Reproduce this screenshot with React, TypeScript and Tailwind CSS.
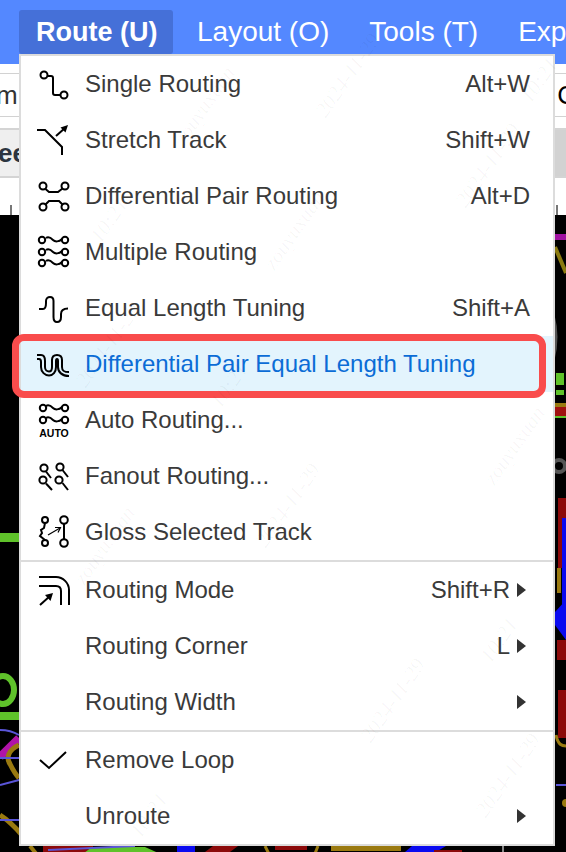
import type { ReactNode } from "react";

const font = "font-['Liberation_Sans',Arial,sans-serif]";

function Icon({ children }: { children: ReactNode }) {
  return (
    <svg width="36" height="36" viewBox="0 0 36 36" fill="none" stroke="#000" strokeWidth="2" className="shrink-0">
      {children}
    </svg>
  );
}

const wave = (y: number) => `M10 ${y - 2} C13 ${y - 4} 15 ${y - 2} 17 ${y} C19 ${y + 2} 23 ${y + 2} 26 ${y - 1}`;

const icons: Record<string, ReactNode> = {
  single: (
    <>
      <circle cx="8" cy="9" r="3.5" />
      <circle cx="28" cy="29" r="3.5" />
      <path d="M11.5 10H15C16.5 10 17 11 17 12V27C17 28.5 17.5 29 19 29H24.5" />
    </>
  ),
  stretch: (
    <>
      <path d="M1 8H9L26 25V33" />
      <path d="M20 14L29 6" />
      <path d="M32 3L24.5 5.5L29.5 10.5Z" fill="#000" stroke="none" />
    </>
  ),
  diff: (
    <>
      <circle cx="7" cy="8" r="3.5" />
      <circle cx="29" cy="8" r="3.5" />
      <circle cx="7" cy="29" r="3.5" />
      <circle cx="29" cy="29" r="3.5" />
      <path d="M9.5 11L13 14H22L26.5 10.5" />
      <path d="M9.5 26.5L13 23H23L26.5 26.5" />
    </>
  ),
  multi: (
    <>
      {[6, 18, 29].map((y) => (
        <g key={y}>
          <circle cx="6" cy={y} r="3.2" />
          <circle cx="29" cy={y} r="3.2" />
          <path d={wave(y)} />
        </g>
      ))}
    </>
  ),
  tuning: <path d="M3 19H7C9.5 19 10 16 10 13V11C10 8.5 12 7 14 7C16 7 17.5 8.5 17.5 11V27C17.5 30 19 32 21 32C23.5 32 25 30 25 27V24C25 20 27 18.5 32 18.5" />,
  diffTuning: (
    <>
      <path d="M1 9H5C8 9 9 12 9 15V21C9 24 11 25.5 13 25.5C15 25.5 16 24 16 21V14C16 11 18 9 21 9C24 9 26 11 26 14V21C26 25 28 26 33 26" />
      <path d="M1 13H3C4.5 13 5 14 5 16V21C5 26 9 29.5 13 29.5C17 29.5 20 26 20 21V15C20 13.5 20.5 13 21 13C21.5 13 22 13.5 22 15V21C22 26 26 30 33 30" />
    </>
  ),
  auto: (
    <>
      {[6, 18].map((y) => (
        <g key={y}>
          <circle cx="7" cy={y} r="3.2" />
          <circle cx="29" cy={y} r="3.2" />
          <path d={wave(y)} />
        </g>
      ))}
      <text x="18" y="35" textAnchor="middle" fill="#000" stroke="none" fontSize="10.5" fontWeight="700" fontFamily="Liberation Sans">
        AUTO
      </text>
    </>
  ),
  fanout: (
    <>
      <circle cx="8" cy="10" r="3.6" />
      <circle cx="24" cy="9" r="3.6" />
      <circle cx="7" cy="22" r="3.6" />
      <circle cx="23" cy="22" r="3.6" />
      <path d="M10 13.500L15 20" />
      <path d="M26.500 12L32 19" />
      <path d="M10 25.500L16 32" />
      <path d="M26.500 25L32 32" />
    </>
  ),
  gloss: (
    <>
      <circle cx="9" cy="6" r="3" />
      <circle cx="9" cy="29" r="3" />
      <circle cx="28" cy="6" r="3.8" />
      <circle cx="28" cy="29" r="3.8" />
      <path d="M28 10V25" />
      <path d="M9 9L8 14L5 16L6 19L4 22L9 26" />
      <path d="M12 21L24 14" strokeWidth="1.2" />
      <path d="M19 13.500L24.500 13.500L22 18.500" strokeWidth="1.2" />
    </>
  ),
  mode: (
    <>
      <path d="M3 5H20C27 5 33 11 33 18V33" />
      <path d="M3 14H20C23 14 25 16 25 19V33" />
      <path d="M4 33L14 24" />
      <path d="M17 21L9 23L14.500 29Z" fill="#000" stroke="none" />
    </>
  ),
  check: <path d="M4 18L13 26L30 10" />,
};

type Item = { label: string; icon?: string; keys?: string; sub?: boolean; active?: boolean };

const groups: Item[][] = [
  [
    { label: "Single Routing", icon: "single", keys: "Alt+W" },
    { label: "Stretch Track", icon: "stretch", keys: "Shift+W" },
    { label: "Differential Pair Routing", icon: "diff", keys: "Alt+D" },
    { label: "Multiple Routing", icon: "multi" },
    { label: "Equal Length Tuning", icon: "tuning", keys: "Shift+A" },
    { label: "Differential Pair Equal Length Tuning", icon: "diffTuning", active: true },
    { label: "Auto Routing...", icon: "auto" },
    { label: "Fanout Routing...", icon: "fanout" },
    { label: "Gloss Selected Track", icon: "gloss" },
  ],
  [
    { label: "Routing Mode", icon: "mode", keys: "Shift+R", sub: true },
    { label: "Routing Corner", keys: "L", sub: true },
    { label: "Routing Width", sub: true },
  ],
  [
    { label: "Remove Loop", icon: "check" },
    { label: "Unroute", sub: true },
  ],
];

function MenuRow({ item }: { item: Item }) {
  return (
    <div className={`flex h-14 items-center pl-[15px] ${item.sub ? "pr-[27px]" : "pr-[23px]"} ${item.active ? "bg-[#e3f4fd] text-[#0b6cd6]" : "text-[#3a3a3a]"}`}>
      <span className="flex w-[49px] shrink-0">{item.icon ? <Icon>{icons[item.icon]}</Icon> : null}</span>
      <span className="flex-1 whitespace-nowrap">{item.label}</span>
      {item.keys && <span>{item.keys}</span>}
      {item.sub && <span className="ml-[7px] h-0 w-0 border-y-[7px] border-l-[9px] border-y-transparent border-l-[#333]" />}
    </div>
  );
}

// the PCB drawing that shows around the menu
function Board() {
  return (
    <svg className="h-full w-full" viewBox="0 0 566 637" preserveAspectRatio="none" fill="none">
      <g transform="translate(0 -215)">
        <rect x="0" y="533" width="19" height="9" fill="#5fc22a" />
        <ellipse cx="3" cy="690" rx="11" ry="14" stroke="#5fc22a" strokeWidth="6" />
        <rect x="0" y="712" width="19" height="8" fill="#5fc22a" />
        <path d="M0 730C8 730 14 732 19 735" stroke="#5a55d8" strokeWidth="2" />
        <path d="M0 757L19 738" stroke="#b014a8" strokeWidth="8" />
        <path d="M19 745C8 750 6 758 10 764C14 772 17 776 19 778" stroke="#9a7a10" strokeWidth="5" />
        <path d="M0 758H19" stroke="#5a55d8" strokeWidth="2" />
        <path d="M0 785L19 780" stroke="#5a55d8" strokeWidth="2" />
        <path d="M0 815C8 820 16 828 22 835" stroke="#9a7a10" strokeWidth="5" />
        <path d="M0 820H19" stroke="#5a55d8" strokeWidth="2" />

        <rect x="555" y="234" width="11" height="6" fill="#a010a0" />
        <path d="M555 247L566 273" stroke="#8a7a10" strokeWidth="4" />
        <path d="M553 315C557 330 557 345 553 360" stroke="#555" strokeWidth="3" />
        <rect x="556" y="373" width="8" height="12" fill="#5fc22a" />
        <rect x="556" y="390" width="8" height="5" fill="#5fc22a" />
        <rect x="555" y="403" width="11" height="4" fill="#9a7a10" />
        <rect x="555" y="407" width="11" height="10" fill="#a01010" />
        <rect x="555" y="416" width="11" height="2" fill="#5fc22a" />
        <circle cx="559" cy="466" r="6" stroke="#555" strokeWidth="4" />
        <rect x="558" y="498" width="8" height="70" fill="#8c0a0a" />
        <rect x="562" y="518" width="4" height="100" fill="#0a0af0" />
        <path d="M566 600L555 612V625L566 640Z" fill="#0a0af0" />
        <rect x="557" y="568" width="4" height="25" fill="#9a7a10" />
        <rect x="557" y="640" width="9" height="20" fill="#8c0a0a" />
        <rect x="558" y="690" width="8" height="48" fill="#8c0a0a" />
        <path d="M556 735C558 745 562 746 566 746" stroke="#9a7a10" strokeWidth="3" />
        <path d="M556 785H566" stroke="#5a55d8" strokeWidth="2" />
        <circle cx="566" cy="803" r="4" fill="#9a7a10" />

        <path d="M30 846L38 856" stroke="#9a7a10" strokeWidth="4" />
        <rect x="43" y="846" width="50" height="6" fill="#8c0a0a" />
        <path d="M80 856L92 847H145L165 856Z" fill="#5fc22a" />
        <path d="M48 850L135 846" stroke="#5a55d8" strokeWidth="2" />
        <rect x="177" y="846" width="18" height="6" fill="#0a0af0" />
        <path d="M205 852L213 846H238L230 852Z" fill="#8c0a0a" />
        <path d="M265 846L270 856M318 846L314 856" stroke="#9a7a10" strokeWidth="3" />
        <rect x="275" y="846" width="32" height="4" fill="#8c0a0a" />
        <rect x="331" y="846" width="70" height="5" fill="#9a7a10" />
        <path d="M405 852L412 846H446L436 852Z" fill="#0a0af0" />
        <rect x="434" y="850" width="28" height="2" fill="#8c0a0a" />
        <rect x="502" y="846" width="2" height="6" fill="#888" />
      </g>
    </svg>
  );
}

const marks = [
  { text: "2024-11-29", pos: "left-[300px] top-[60px]" },
  { text: "zouyuxuan", pos: "left-[160px] top-[90px]" },
  { text: "10:21", pos: "left-[515px] top-[65px]" },
  { text: "2024-11-29", pos: "left-[440px] top-[150px]" },
  { text: "10:21", pos: "left-[85px] top-[205px]" },
  { text: "zouyuxuan", pos: "left-[250px] top-[215px]" },
  { text: "2024-11-29", pos: "left-[60px] top-[330px]" },
  { text: "10:21", pos: "left-[205px] top-[370px]" },
  { text: "zouyuxuan", pos: "left-[470px] top-[430px]" },
  { text: "2024-11-29", pos: "left-[240px] top-[490px]" },
  { text: "zouyuxuan", pos: "left-[60px] top-[530px]" },
  { text: "10:21", pos: "left-[475px] top-[625px]" },
  { text: "2024-11-29", pos: "left-[345px] top-[685px]" },
  { text: "2024-11-29", pos: "left-[460px] top-[760px]" },
  { text: "10:21", pos: "left-[125px] top-[800px]" },
];

export default function App() {
  return (
    <div className={`relative flex h-[852px] w-[566px] flex-col overflow-hidden bg-white ${font}`}>
      <header className="flex h-16 shrink-0 items-start whitespace-nowrap bg-[#5488ff] pl-[19px] pt-2.5 text-[28px] leading-[44px] text-white">
        <div className="mr-6 w-[154px] shrink-0 rounded-[3px] bg-[#4570d8] pl-[17px] text-[27px] font-bold">Route (U)</div>
        <div className="mr-10 shrink-0">Layout (O)</div>
        <div className="mr-10 shrink-0">Tools (T)</div>
        <div className="shrink-0">Export (X)</div>
      </header>
      <div className="flex h-16 shrink-0 flex-col pt-[9px]">
        <div className="flex h-[44px] items-center justify-between overflow-hidden border-y border-[#d2d2d2] text-[26px] text-[#333]">
          <span className="-ml-[4px]">m</span>
          <span className="-mr-[10px] text-black">C</span>
        </div>
      </div>
      <div className="flex h-[50px] shrink-0 items-center justify-between overflow-hidden border-y-2 border-[#d4d4d4] bg-[#efefef] text-[26px] font-bold text-[#2c3440]">
        <span className="-ml-[2px]">ee</span>
        <span className="h-full w-[11px] bg-[#d2d2d2]" />
      </div>
      <div className="flex h-[37px] shrink-0 items-end justify-between bg-white pl-[10px] pr-[8px]">
        <span className="h-[10px] w-0.5 bg-[#777]" />
        <span className="h-[10px] w-0.5 bg-[#777]" />
      </div>
      <div className="min-h-0 flex-1 bg-black">
        <Board />
      </div>

      {/* dropdown */}
      <div className="absolute left-[19px] top-[54px] w-[536px] border-2 border-[#dcdcdc] bg-white text-2xl">
        {groups.map((group, i) => (
          <div key={i} className={i > 0 ? "border-t-2 border-[#dcdcdc]" : ""}>
            {group.map((item) => (
              <MenuRow key={item.label} item={item} />
            ))}
          </div>
        ))}
      </div>

      {/* annotation */}
      <div className="absolute left-[12px] top-[334px] h-[64px] w-[534px] rounded-xl border-[7px] border-[#f94c4c]" />

      {/* watermark */}
      {marks.map((m, i) => (
        <span key={i} className={`pointer-events-none absolute -rotate-[55deg] whitespace-nowrap font-['Liberation_Serif',serif] text-[21px] italic text-black/[0.035] ${m.pos}`}>
          {m.text}
        </span>
      ))}
    </div>
  );
}
